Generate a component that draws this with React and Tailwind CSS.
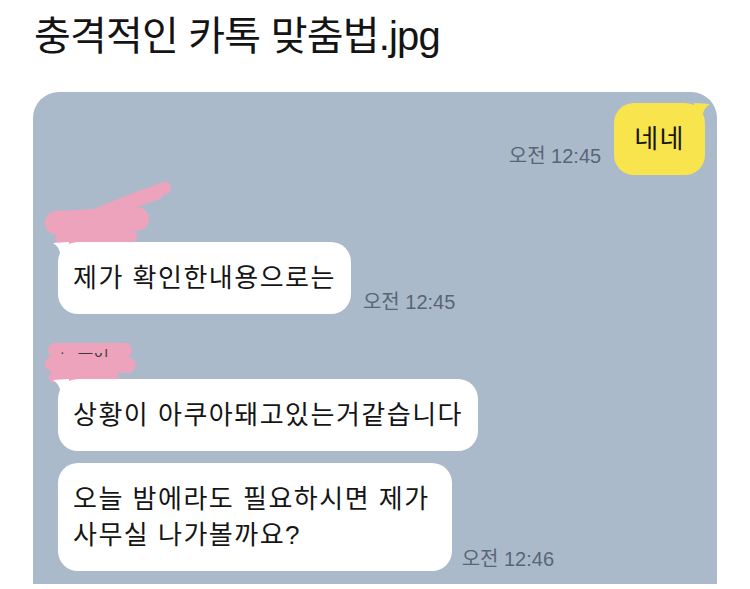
import React from 'react';

const Tail = ({ side, color }) =>
  side === 'left' ? (
    <svg className="absolute -left-[5px] top-0" width="16" height="14" viewBox="0 0 16 14">
      <path d="M16 0 L0 1 Q6 4 8 14 L16 14 Z" fill={color} />
    </svg>
  ) : (
    <svg className="absolute -right-[5px] top-0" width="16" height="14" viewBox="0 0 16 14">
      <path d="M0 0 L16 1 Q10 4 8 14 L0 14 Z" fill={color} />
    </svg>
  );

const Time = ({ children }) => (
  <span className="text-[20px] leading-[22px] text-[#5a6573] whitespace-nowrap">{children}</span>
);

const Bubble = ({ children, tail, wide }) => (
  <div
    className={`relative bg-white rounded-[20px] pl-[15px] ${wide ? 'pr-[22px]' : 'pr-[15px]'} py-[18px] text-[26px] leading-[36px] tracking-[1.5px] text-[#151515] whitespace-nowrap`}
  >
    {tail && <Tail side="left" color="#ffffff" />}
    {children}
  </div>
);

export default function App() {
  return (
    <div className="w-[750px] h-[589px] bg-white overflow-hidden font-[family-name:'Liberation_Sans','Noto_Sans_CJK_KR',sans-serif]">
      <div className="pl-[34px] pt-[13px] h-[92px] text-[40px] leading-[46px] tracking-[-0.8px] text-[#141414]">
        충격적인 카톡 맞춤법.jpg
      </div>

      <div className="ml-[33px] w-[684px] h-[492px] bg-[#abbacb] rounded-t-[26px] pt-[11px]">
        {/* my message */}
        <div className="flex items-end justify-end gap-[13px] pr-[12px]">
          <div className="mb-[5px]">
            <Time>오전 12:45</Time>
          </div>
          <div className="relative bg-[#f8e44c] rounded-[20px] px-[20px] py-[18px] text-[26px] leading-[36px] tracking-[1.5px] text-[#151515]">
            <Tail side="right" color="#f8e44c" />
            네네
          </div>
        </div>

        {/* redacted name 1 */}
        <div className="relative h-[67px]">
          <svg className="absolute left-0 top-0 overflow-visible" width="160" height="67">
            <g stroke="#eda3bc" strokeLinecap="round" fill="none">
              <path d="M24 48 L104 44" strokeWidth="24" />
              <path d="M28 64 L98 62" strokeWidth="12" />
              <path d="M62 40 Q97 25 132 13" strokeWidth="12" />
              <path d="M60 44 Q95 30 125 20" strokeWidth="9" />
            </g>
          </svg>
        </div>

        <div className="flex items-end gap-[12px] pl-[25px]">
          <Bubble tail>제가 확인한내용으로는</Bubble>
          <div className="mb-[-2px]">
            <Time>오전 12:45</Time>
          </div>
        </div>

        {/* redacted name 2 */}
        <div className="relative h-[65px]">
          <svg className="absolute left-0 top-0 overflow-visible" width="120" height="65">
            <g stroke="#eda3bc" strokeLinecap="round" fill="none">
              <path d="M22 36 L92 36" strokeWidth="14" />
              <path d="M20 50 L95 51" strokeWidth="16" />
              <path d="M22 63 L80 64" strokeWidth="12" />
            </g>
          </svg>
          <span className="absolute left-[27px] top-[30px] text-[14px] leading-[16px] text-[#3a3a3a] tracking-[2px]">·&nbsp;&nbsp;—ᴗı</span>
        </div>

        <div className="flex flex-col items-start gap-[12px] pl-[25px]">
          <Bubble tail>상황이 아쿠아돼고있는거같습니다</Bubble>
          <div className="flex items-end gap-[10px]">
            <Bubble wide>
              오늘 밤에라도 필요하시면 제가
              <br />
              사무실 나가볼까요?
            </Bubble>
            <div className="mb-[-2px]">
              <Time>오전 12:46</Time>
            </div>
          </div>
        </div>
      </div>
    </div>
  );
}
